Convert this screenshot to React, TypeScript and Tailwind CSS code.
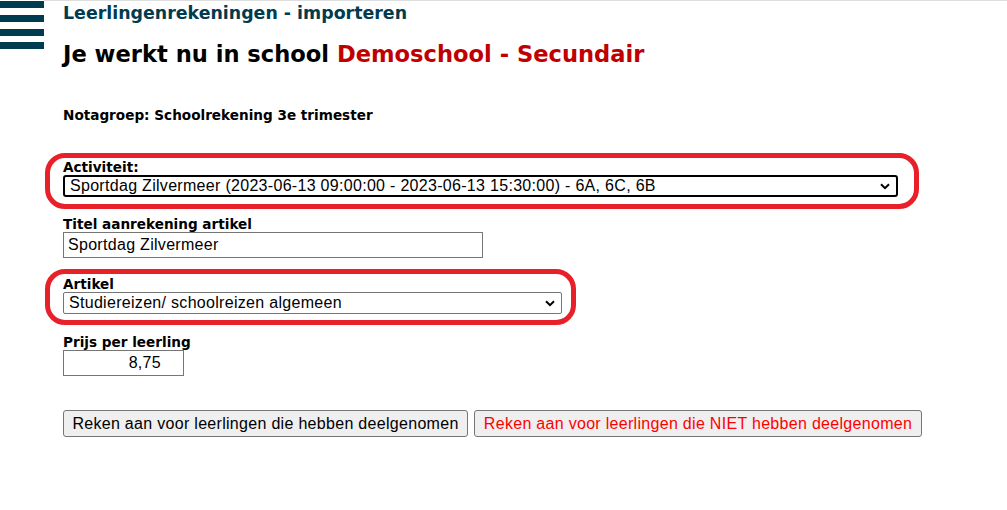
import React from 'react';

const labelCls = "block font-['DejaVu_Sans',Verdana,sans-serif] text-[13.6px] leading-[15px] font-bold text-black";
const ctrlFont = "font-['Liberation_Sans',Arial,sans-serif] text-[16px] tracking-[0.3px] text-black";

function Chevron() {
	return (
		<svg width="10" height="7" viewBox="0 0 10 7" className="shrink-0">
			<path d="M1 1.2 L5 5.2 L9 1.2" fill="none" stroke="#000" strokeWidth="2" />
		</svg>
	);
}

function FakeSelect({ value, className }: { value: string; className: string }) {
	return (
		<div className={`flex items-center justify-between bg-white pl-[5px] pr-[6px] ${ctrlFont} ${className}`}>
			<span className="leading-[18px] whitespace-nowrap">{value}</span>
			<Chevron />
		</div>
	);
}

function App() {
	return (
		<div className="flex min-h-[510px] w-full bg-white">
			<svg width="44" height="50" viewBox="0 0 44 50" className="shrink-0">
				<rect x="0" y="1" width="44" height="7" fill="#003b4f" />
				<rect x="0" y="15" width="44" height="7" fill="#003b4f" />
				<rect x="0" y="29" width="44" height="7" fill="#003b4f" />
				<rect x="0" y="42" width="44" height="7" fill="#003b4f" />
			</svg>
			<main className="flex-1 border-t border-[#dedede] pl-[19px]">
				<h1 className="mt-[1px] font-['DejaVu_Sans',Verdana,sans-serif] text-[17.4px] leading-[22px] font-bold text-[#003b4f]">
					Leerlingenrekeningen - importeren
				</h1>
				<h2 className="mt-[16px] font-['DejaVu_Sans',Verdana,sans-serif] text-[22.6px] leading-[28px] font-bold text-black">
					Je werkt nu in school <span className="text-[#c00000]">Demoschool - Secundair</span>
				</h2>
				<p className={`mt-[40px] ${labelCls}`}>Notagroep: Schoolrekening 3e trimester</p>

				<div className="mt-[30px] -ml-[18px] w-[874px] rounded-[20px] border-[5px] border-[#e8202a] pt-[2px] pb-[7px] pl-[13px]">
					<label className={labelCls}>Activiteit:</label>
					<FakeSelect
						value="Sportdag Zilvermeer (2023-06-13 09:00:00 - 2023-06-13 15:30:00) - 6A, 6C, 6B"
						className="h-[22px] w-[835px] rounded-[3px] border-2 border-black"
					/>
				</div>

				<label className={`mt-[8px] ${labelCls}`}>Titel aanrekening artikel</label>
				<div className={`flex h-[26px] w-[420px] items-center border border-[#767676] px-[4px] ${ctrlFont}`}>
					Sportdag Zilvermeer
				</div>

				<div className="mt-[11px] -ml-[18px] w-[531px] rounded-[20px] border-[5px] border-[#e8202a] pt-[3px] pb-[6px] pl-[13px]">
					<label className={labelCls}>Artikel</label>
					<FakeSelect
						value="Studiereizen/ schoolreizen algemeen"
						className="h-[22px] w-[499px] rounded-[2px] border border-[#767676]"
					/>
				</div>

				<label className={`mt-[10px] ${labelCls}`}>Prijs per leerling</label>
				<div className={`flex h-[26px] w-[121px] items-center justify-end border border-[#767676] pl-[6px] pr-[22px] ${ctrlFont}`}>
					8,75
				</div>

				<div className="mt-[34px] flex gap-[6px]">
					<button className={`h-[27px] w-[405px] rounded-[3px] border border-[#767676] bg-[#efefef] ${ctrlFont}`}>
						Reken aan voor leerlingen die hebben deelgenomen
					</button>
					<button className={`h-[27px] w-[448px] rounded-[3px] border border-[#767676] bg-[#efefef] ${ctrlFont} !text-[#ff0000]`}>
						Reken aan voor leerlingen die NIET hebben deelgenomen
					</button>
				</div>
			</main>
		</div>
	);
}

export default App;
